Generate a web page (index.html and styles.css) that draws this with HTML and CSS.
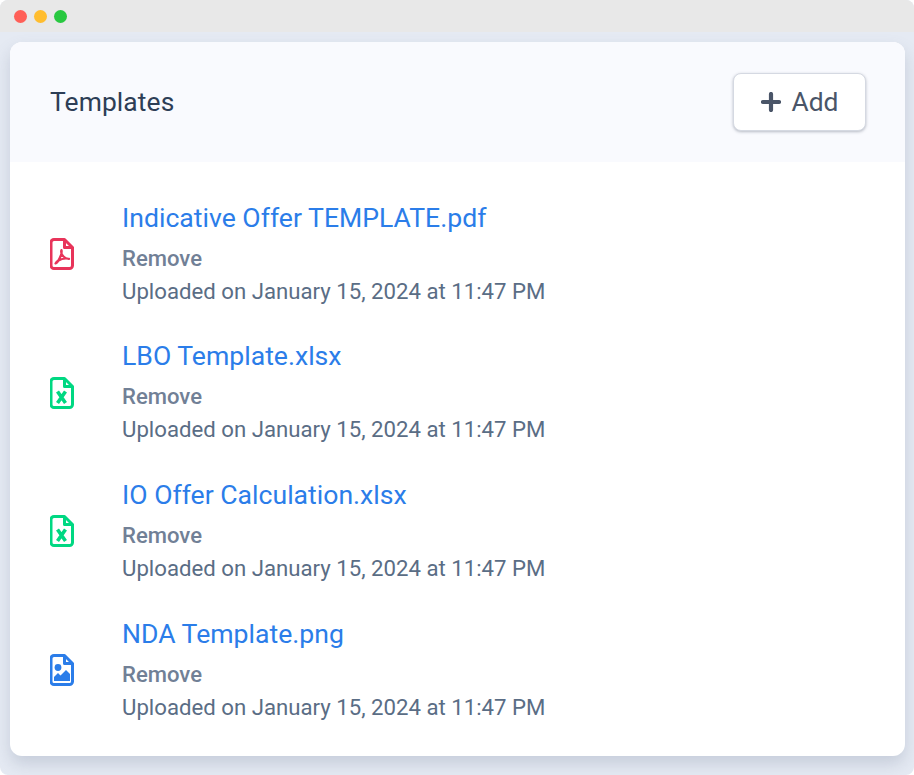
FILE: index.html
```html
<!DOCTYPE html>
<html lang="en">
<head>
<meta charset="utf-8">
<title>Templates</title>
<link rel="stylesheet" href="styles.css">
</head>
<body>
<div class="window">
  <div class="titlebar">
    <span class="dot dot-red"></span>
    <span class="dot dot-yellow"></span>
    <span class="dot dot-green"></span>
  </div>
  <div class="stage">
    <main class="card">
      <header class="card-header">
        <h1 class="card-title">Templates</h1>
        <button class="add-btn" type="button">
          <svg class="plus" viewBox="0 0 20 20" width="20" height="20" aria-hidden="true"><path d="M10 2v16M2 10h16" fill="none" stroke="currentColor" stroke-width="4.200" stroke-linecap="round"/></svg>
          <span>Add</span>
        </button>
      </header>
      <ul class="file-list">
        <li class="file">
          <svg class="file-icon pdf" viewBox="0 0 24 32" aria-hidden="true">
            <path class="outline" d="M4 1.5h10.5l8 8V27.5a3 3 0 0 1-3 3H4a3 3 0 0 1-3-3V4.500a3 3 0 0 1 3-3z"/>
            <path class="outline" d="M14.500 1.500V9.500H22.500"/>
            <path class="thin" d="M5.500 25.500c2-1 4-4.500 5.500-8.500.6-1.700.9-3.500.5-5-.6 1.500.1 4.500 2 6.500 1.500 1.600 3.600 2.500 5.500 2.300-2.800-.8-8 .2-11 2-1.100.7-2 1.700-2.500 2.700z"/>
          </svg>
          <div class="file-info">
            <a class="file-name" href="#">Indicative Offer TEMPLATE.pdf</a>
            <a class="file-remove" href="#">Remove</a>
            <p class="file-meta">Uploaded on January 15, 2024 at 11:47 PM</p>
          </div>
        </li>
        <li class="file">
          <svg class="file-icon xls" viewBox="0 0 24 32" aria-hidden="true">
            <path class="outline" d="M4 1.5h10.5l8 8V27.5a3 3 0 0 1-3 3H4a3 3 0 0 1-3-3V4.500a3 3 0 0 1 3-3z"/>
            <path class="outline" d="M14.500 1.500V9.500H22.500"/>
            <path class="cross" d="M7.500 14.500l8 11.500M15.500 14.500l-8 11.500"/>
          </svg>
          <div class="file-info">
            <a class="file-name" href="#">LBO Template.xlsx</a>
            <a class="file-remove" href="#">Remove</a>
            <p class="file-meta">Uploaded on January 15, 2024 at 11:47 PM</p>
          </div>
        </li>
        <li class="file">
          <svg class="file-icon xls" viewBox="0 0 24 32" aria-hidden="true">
            <path class="outline" d="M4 1.5h10.5l8 8V27.5a3 3 0 0 1-3 3H4a3 3 0 0 1-3-3V4.500a3 3 0 0 1 3-3z"/>
            <path class="outline" d="M14.500 1.500V9.500H22.500"/>
            <path class="cross" d="M7.500 14.500l8 11.500M15.500 14.500l-8 11.500"/>
          </svg>
          <div class="file-info">
            <a class="file-name" href="#">IO Offer Calculation.xlsx</a>
            <a class="file-remove" href="#">Remove</a>
            <p class="file-meta">Uploaded on January 15, 2024 at 11:47 PM</p>
          </div>
        </li>
        <li class="file">
          <svg class="file-icon img" viewBox="0 0 24 32" aria-hidden="true">
            <path class="outline" d="M4 1.5h10.5l8 8V27.5a3 3 0 0 1-3 3H4a3 3 0 0 1-3-3V4.500a3 3 0 0 1 3-3z"/>
            <path class="outline" d="M14.500 1.500V9.500H22.500"/>
            <circle class="solid" cx="8" cy="13.500" r="3.400"/>
            <path class="solid" d="M4 27v-4l4-4 2.500 2.500 5.500-5.500 4 4V27z"/>
          </svg>
          <div class="file-info">
            <a class="file-name" href="#">NDA Template.png</a>
            <a class="file-remove" href="#">Remove</a>
            <p class="file-meta">Uploaded on January 15, 2024 at 11:47 PM</p>
          </div>
        </li>
      </ul>
    </main>
  </div>
</div>
</body>
</html>
```

FILE: styles.css
```css
* { box-sizing: border-box; }
html, body { margin: 0; height: 100%; background: #fff; }
body { font-family: Roboto, "Liberation Sans", sans-serif; overflow: hidden; }

.window {
  width: 914px;
  height: 775px;
  display: flex;
  flex-direction: column;
  background: #e5eaf3;
  border-radius: 8px;
  overflow: hidden;
}
.titlebar {
  height: 32px;
  flex: none;
  background: #e8e8e8;
  display: flex;
  align-items: center;
  gap: 7px;
  padding: 0 0 0 14px;
}
.dot { width: 13px; height: 13px; border-radius: 50%; }
.dot-red { background: #ff5f57; }
.dot-yellow { background: #ffbd2e; }
.dot-green { background: #28c840; }

.stage { flex: 1; padding: 10px 9px 19px 10px; }
.card {
  height: 714px;
  background: #fff;
  border-radius: 12px;
  overflow: hidden;
  box-shadow: 0 8px 16px rgba(90, 105, 130, .22);
}
.card-header {
  height: 120px;
  background: #f9fafe;
  display: flex;
  align-items: center;
  justify-content: space-between;
  padding: 0 39px 0 40px;
}
.card-title {
  margin: 0;
  font-size: 26.400px;
  letter-spacing: .1px;
  font-weight: 400;
  color: #2d3e56;
}
.add-btn {
  width: 133px;
  height: 58px;
  display: flex;
  align-items: center;
  justify-content: center;
  gap: 11px;
  background: #fff;
  border: 1px solid #d5d9e2;
  border-radius: 8px;
  box-shadow: 0 1px 3px rgba(60, 70, 90, .35);
  color: #4a5568;
  font: 400 26.400px Roboto, sans-serif;
  padding: 0;
}
.plus { flex: none; }

.file-list { list-style: none; margin: 0; padding: 32px 0 0 40px; }
.file {
  height: 138.600px;
  display: flex;
  align-items: center;
  gap: 48px;
  padding-bottom: 18px;
}
.file-icon { width: 24px; height: 32px; flex: none; fill: none; }
.outline { fill: none; stroke: currentColor; stroke-width: 3; stroke-linejoin: round; }
.thin { fill: none; stroke: currentColor; stroke-width: 2.200; stroke-linejoin: round; }
.cross { fill: none; stroke: currentColor; stroke-width: 3.600; }
.solid { fill: currentColor; }
.pdf { color: #e8345a; }
.xls { color: #00d882; }
.img { color: #2b7de9; }

.file-info { display: flex; flex-direction: column; align-items: flex-start; margin-bottom: 4px; }
.file-name { font-size: 26.600px; line-height: 38px; color: #2b7de9; text-decoration: none; }
.file-remove { margin-top: 6px; font-size: 22.100px; font-weight: 500; line-height: 30px; color: #718096; text-decoration: none; }
.file-meta { margin: 3px 0 0; font-size: 22.200px; line-height: 30px; color: #5a6d85; }
```
